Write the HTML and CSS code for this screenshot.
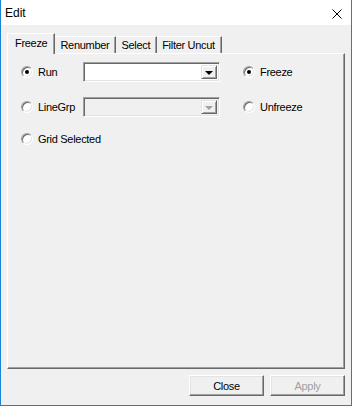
FILE: index.html
```html
<!DOCTYPE html>
<html lang="en">
<head>
    <meta charset="UTF-8">
    <title>Edit</title>
    <link rel="stylesheet" href="styles.css">
</head>
<body>
    <div class="window">
        <div class="titlebar">
            <span class="title">Edit</span>
            <svg class="close-x" width="10" height="10" viewBox="0 0 10 10">
                <path d="M0.5 0.5 L9.5 9.5 M9.5 0.5 L0.5 9.5" stroke="#000" stroke-width="1" fill="none"/>
            </svg>
        </div>

        <div class="content">
            <div class="tabs">
                <div class="tab active">Freeze</div>
                <div class="tab">Renumber</div>
                <div class="tab">Select</div>
                <div class="tab">Filter Uncut</div>
            </div>

            <div class="pane">
                <div class="row">
                    <label class="radio-item first">
                        <span class="radio checked"></span>Run
                    </label>
                    <div class="combo">
                        <div class="combo-field"></div>
                        <div class="combo-btn"><span class="arrow"></span></div>
                    </div>
                    <label class="radio-item">
                        <span class="radio checked"></span>Freeze
                    </label>
                </div>
                <div class="row row-2">
                    <label class="radio-item first">
                        <span class="radio"></span>LineGrp
                    </label>
                    <div class="combo disabled">
                        <div class="combo-field"></div>
                        <div class="combo-btn"><span class="arrow"></span></div>
                    </div>
                    <label class="radio-item">
                        <span class="radio"></span>Unfreeze
                    </label>
                </div>
                <div class="row row-3">
                    <label class="radio-item">
                        <span class="radio"></span>Grid Selected
                    </label>
                </div>
            </div>

            <div class="buttons">
                <button class="btn">Close</button>
                <button class="btn" disabled>Apply</button>
            </div>
        </div>
    </div>
</body>
</html>
```

FILE: styles.css
```css
html, body {
    margin: 0;
    padding: 0;
    background: #f0f0f0;
}

.window {
    width: 352px;
    height: 406px;
    box-sizing: border-box;
    border: 1px solid #1883d7;
    border-top: none;
    background: #f0f0f0;
    display: flex;
    flex-direction: column;
    font-family: "Liberation Sans", Arial, sans-serif;
    font-size: 11px;
    letter-spacing: -0.3px;
    color: #000;
}

.titlebar {
    height: 25px;
    background: #ffffff;
    display: flex;
    align-items: center;
    justify-content: space-between;
    padding: 0 9px 0 4px;
    letter-spacing: 0;
}

.title {
    font-size: 12px;
    margin-top: 1px;
}

.close-x {
    margin-top: 3px;
}

.content {
    flex: 1;
    display: flex;
    flex-direction: column;
    padding: 8px 6px 0 6px;
}

/* onglets */
.tabs {
    display: flex;
    align-items: flex-end;
    height: 20px;
    position: relative;
    z-index: 1;
}

.tab {
    height: 17px;
    box-sizing: border-box;
    padding: 2px 6px 0 5px;
    border-top: 1px solid #ffffff;
    border-left: 1px solid #ffffff;
    border-right: 1px solid #696969;
    box-shadow: inset -1px 0 0 #a0a0a0;
    background: #f0f0f0;
}

.tab.active {
    height: 21px;
    margin-bottom: -1px;
    padding: 3px 7px 0 7px;
}

.tab + .tab {
    border-left: none;
}

.pane {
    height: 316px;
    box-sizing: border-box;
    border-top: 1px solid #ffffff;
    border-left: 1px solid #ffffff;
    border-right: 1px solid #696969;
    border-bottom: 1px solid #696969;
    box-shadow: inset -1px -1px 0 #a0a0a0;
    padding: 8px 0 0 13px;
}

.row {
    display: flex;
    align-items: center;
    height: 20px;
}

.row-2 {
    margin-top: 15px;
}

.row-3 {
    margin-top: 12px;
}

.radio-item {
    display: flex;
    align-items: center;
}

.radio-item.first {
    width: 62px;
}

.row .combo + .radio-item {
    margin-left: 23px;
}

.radio {
    width: 12px;
    height: 12px;
    box-sizing: border-box;
    border-radius: 50%;
    background: #ffffff;
    border: 1px solid;
    border-color: #a0a0a0 #ffffff #ffffff #a0a0a0;
    box-shadow: inset 1px 1px 0 #696969, inset -1px -1px 0 #e3e3e3;
    margin-right: 5px;
    position: relative;
}

.radio.checked::after {
    content: '';
    position: absolute;
    left: 3px;
    top: 3px;
    width: 4px;
    height: 4px;
    border-radius: 50%;
    background: #000;
}

/* liste deroulante */
.combo {
    width: 137px;
    height: 20px;
    box-sizing: border-box;
    display: flex;
    border: 1px solid;
    border-color: #a0a0a0 #ffffff #ffffff #a0a0a0;
    box-shadow: inset 1px 1px 0 #696969, inset -1px -1px 0 #e3e3e3;
    background: #ffffff;
    padding: 2px;
}

.combo-field {
    flex: 1;
}

.combo-btn {
    width: 16px;
    box-sizing: border-box;
    background: #f0f0f0;
    border: 1px solid;
    border-color: #e3e3e3 #696969 #696969 #e3e3e3;
    box-shadow: inset 1px 1px 0 #ffffff, inset -1px -1px 0 #a0a0a0;
    display: flex;
    align-items: center;
    justify-content: center;
}

.arrow {
    width: 0;
    height: 0;
    border-left: 4px solid transparent;
    border-right: 4px solid transparent;
    border-top: 4px solid #000;
    margin-top: 1px;
}

.combo.disabled {
    background: #f0f0f0;
}

.combo.disabled .arrow {
    border-top-color: #a0a0a0;
}

/* boutons */
.buttons {
    display: flex;
    justify-content: flex-end;
    gap: 6px;
    margin-top: 6px;
}

.btn {
    width: 75px;
    height: 21px;
    box-sizing: border-box;
    background: #f0f0f0;
    border: 1px solid;
    border-color: #ffffff #696969 #696969 #ffffff;
    box-shadow: inset -1px -1px 0 #a0a0a0, inset 1px 1px 0 #e3e3e3;
    font-family: "Liberation Sans", Arial, sans-serif;
    font-size: 11px;
    letter-spacing: -0.3px;
    color: #000;
    padding: 0;
    border-radius: 0;
}

.btn:disabled {
    color: #a0a0a0;
}
```
